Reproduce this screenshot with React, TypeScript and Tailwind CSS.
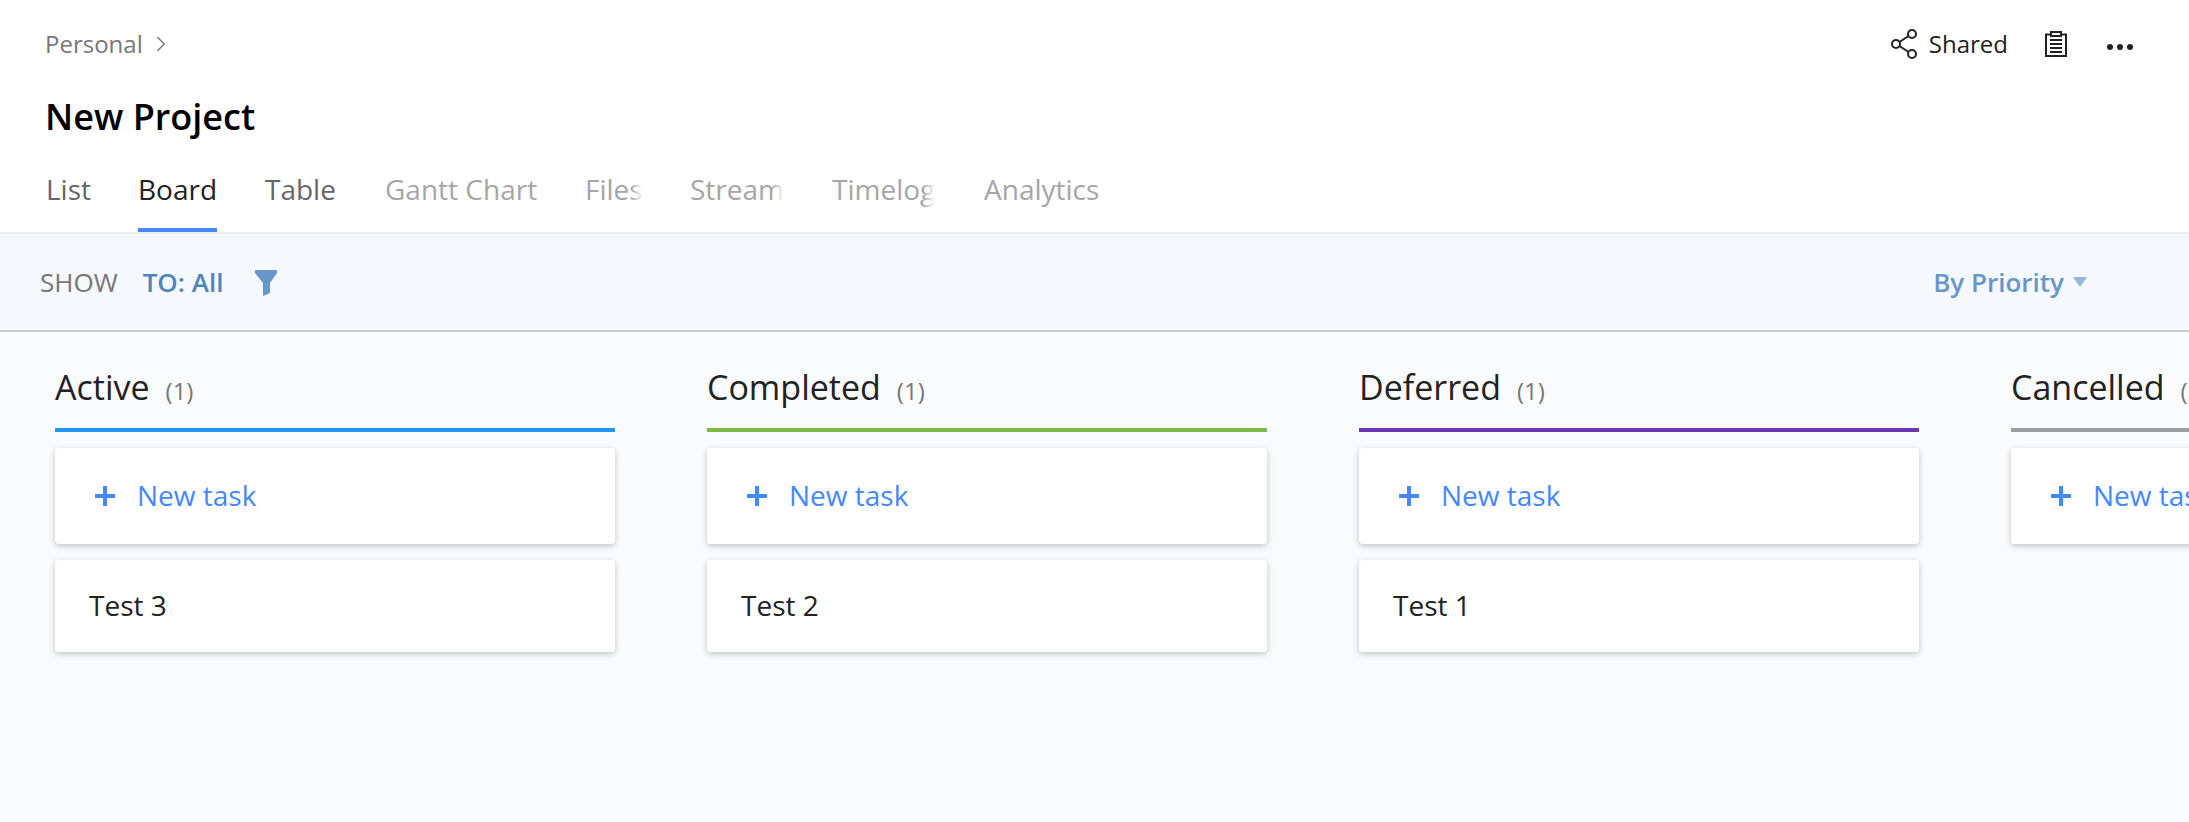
import { ChevronRight } from 'lucide-react';

const tabs = [
  { label: 'List', className: 'text-[#666666]', width: 'w-[92px]' },
  { label: 'Board', className: 'text-[#222222]', width: 'w-[127px]', active: true },
  { label: 'Table', className: 'text-[#666666]', width: 'w-[120px]' },
  { label: 'Gantt Chart', className: 'text-[#a6a6a6]', width: 'w-[200px]' },
  { label: 'Files', className: 'text-[#a6a6a6]', width: 'w-[105px]', fade: true },
  { label: 'Stream', className: 'text-[#a6a6a6]', width: 'w-[142px]', fade: true },
  { label: 'Timelog', className: 'text-[#a6a6a6]', width: 'w-[152px]', fade: true },
  { label: 'Analytics', className: 'text-[#a6a6a6]', width: 'w-[130px]' },
];

const columns = [
  { title: 'Active', bar: 'bg-[#2396f3]', task: 'Test 3' },
  { title: 'Completed', bar: 'bg-[#7cba45]', task: 'Test 2' },
  { title: 'Deferred', bar: 'bg-[#6a37b0]', task: 'Test 1' },
  { title: 'Cancelled', bar: 'bg-[#9e9e9e]' },
];

function ShareIcon() {
  return (
    <svg width="26" height="30" viewBox="0 0 26 30" fill="none" stroke="#222222" strokeWidth="2">
      <circle cx="5" cy="15" r="4" />
      <circle cx="21" cy="5" r="4" />
      <circle cx="21" cy="25" r="4" />
      <path d="M8.5 13 L17.5 7 M8.5 17 L17.5 23" />
    </svg>
  );
}

function ClipboardIcon() {
  return (
    <svg width="22" height="26" viewBox="0 0 22 26" fill="none" stroke="#222222" strokeWidth="2">
      <path d="M6 3.5 H1 V25 H21 V3.5 H16" />
      <path d="M6 5 V1 H16 V5 Z" />
      <path d="M5 9 H17 M5 13 H17 M5 17 H17 M5 21 H17" />
    </svg>
  );
}

function DotsIcon() {
  return (
    <svg width="26" height="6" viewBox="0 0 26 6" fill="#222222">
      <circle cx="3" cy="3" r="3" />
      <circle cx="13" cy="3" r="3" />
      <circle cx="23" cy="3" r="3" />
    </svg>
  );
}

function FunnelIcon() {
  return (
    <svg width="22" height="26" viewBox="0 0 22 26" fill="#6797c9">
      <path d="M0 0 H22 V3 L15 13 V23 L8 26 V13 L0 3 Z" />
    </svg>
  );
}

function PlusIcon() {
  return (
    <svg width="20" height="20" viewBox="0 0 20 20" fill="#4488ff">
      <path d="M8 0 H12 V8 H20 V12 H12 V20 H8 V12 H0 V8 H8 Z" />
    </svg>
  );
}

export default function App() {
  return (
    <div className="h-[822px] w-[2189px] overflow-hidden bg-[#fafbfd] font-['Open_Sans',sans-serif]">
      {/* Header */}
      <div className="h-[234px] border-b-2 border-[#eeeeee] bg-white pl-[45px]">
        <div className="flex h-[87px] items-center justify-between pr-[56px]">
          <div className="flex items-center gap-[5px] text-[24px] text-[#777777]">
            Personal
            <ChevronRight size={26} strokeWidth={1.25} />
          </div>
          <div className="flex items-center">
            <ShareIcon />
            <span className="ml-[12px] text-[24px] text-[#222222]">Shared</span>
            <span className="ml-[37px] flex"><ClipboardIcon /></span>
            <span className="ml-[40px] mt-[6px] flex"><DotsIcon /></span>
          </div>
        </div>
        <h1 className="mt-[5px] text-[36px] leading-[50px] font-semibold text-black">New Project</h1>
        <div className="mt-[7px] flex h-[83px] items-start pl-[1px]">
          {tabs.map((tab) => (
            <div key={tab.label} className={`relative h-[83px] ${tab.width}`}>
              <span className={`relative inline-block pt-[21px] text-[28px] leading-[38px] ${tab.className}`}>
                {tab.label}
                {tab.fade && <span className="absolute top-0 right-0 bottom-0 w-[12px] bg-gradient-to-r from-transparent to-white" />}
              </span>
              {tab.active && <span className="absolute bottom-0 left-0 h-[4px] w-[79px] bg-[#4488ff]" />}
            </div>
          ))}
        </div>
      </div>

      {/* Toolbar */}
      <div className="flex h-[98px] items-center justify-between border-b-2 border-[#c9ccce] bg-[#f5f8fc] pr-[102px] pl-[40px]">
        <div className="flex items-center">
          <span className="text-[26px] text-[#777777]">SHOW</span>
          <span className="ml-[25px] text-[26px] font-semibold text-[#4d85bd]">TO: All</span>
          <span className="ml-[32px] mt-[2px] flex"><FunnelIcon /></span>
        </div>
        <div className="flex items-center">
          <span className="text-[26px] font-semibold text-[#6797c9]">By Priority</span>
          <span className="ml-[9px] h-0 w-0 border-x-[7px] border-t-[10px] border-x-transparent border-t-[#94b6da]" />
        </div>
      </div>

      {/* Board */}
      <div className="flex gap-[92px] pl-[55px]">
        {columns.map((col) => (
          <div key={col.title} className="w-[560px] shrink-0">
            <div className="flex h-[96px] items-baseline pt-[32px]">
              <span className="text-[34px] leading-[46px] text-[#222222]">{col.title}</span>
              <span className="ml-[16px] text-[24px] leading-[30px] text-[#777777]">(1)</span>
            </div>
            <div className={`h-[4px] ${col.bar}`} />
            <div className="mt-[16px] flex h-[96px] items-center rounded-[4px] bg-white pl-[40px] shadow-[0_2px_6px_rgba(0,0,0,0.22)]">
              <PlusIcon />
              <span className="ml-[22px] mt-[-2px] text-[28px] text-[#4488ff]">New task</span>
            </div>
            {col.task && (
              <div className="mt-[16px] flex h-[92px] items-center rounded-[4px] bg-white pb-[2px] pl-[34px] text-[28px] text-[#222222] shadow-[0_2px_6px_rgba(0,0,0,0.22)]">
                {col.task}
              </div>
            )}
          </div>
        ))}
      </div>
    </div>
  );
}
